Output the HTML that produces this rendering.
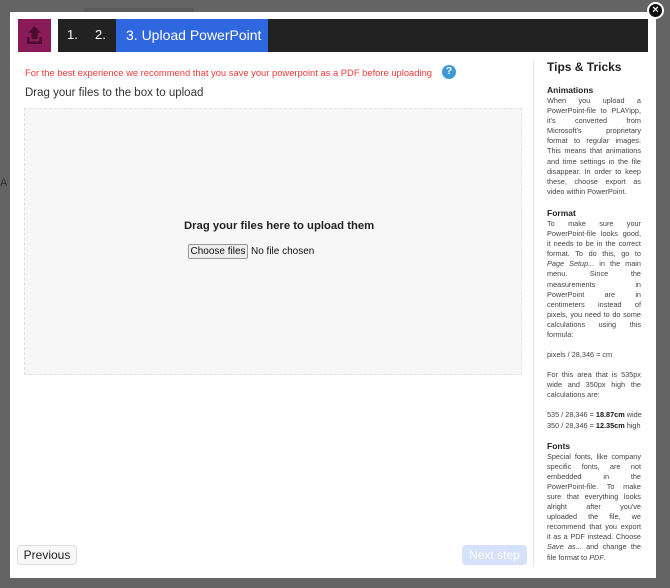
<!DOCTYPE html>
<html><head><meta charset="utf-8"><style>
*{box-sizing:border-box;margin:0;padding:0}
body{width:670px;height:588px;background:#646464;font-family:"Liberation Sans",sans-serif;position:relative;overflow:hidden}
.modal{position:absolute;left:10px;top:12px;width:646px;height:566px;background:#fff}
.abs{position:absolute;white-space:nowrap}
.side{position:absolute;left:537px;width:94px;font-size:7.3px;color:#444;line-height:10.1px}
.j{white-space:nowrap;display:flex;justify-content:space-between}
.n{white-space:nowrap}
.side h4{font-size:8.5px;color:#222;font-weight:bold;line-height:11px}
</style></head><body>
<div class="abs" style="left:84px;top:8px;width:110px;height:4px;background:#5a5a5a"></div>
<div class="abs" style="left:0;top:177px;font-size:11px;color:#333">A</div>
<div class="modal">
 <div class="abs" style="left:8px;top:7px;width:33px;height:33px;background:#8a1a58">
  <svg width="33" height="33" viewBox="0 0 33 33"><path d="M16.5 7 L23 14 H19.5 V20 H13.5 V14 H10 Z" fill="#4a0d2e"/><path d="M9 18 V25 H24 V18 H21.5 V22.5 H11.5 V18 Z" fill="#4a0d2e"/></svg>
 </div>
 <div class="abs" style="left:48px;top:7px;width:590px;height:33px;background:#222"></div>
 <div class="abs" style="left:57px;top:15px;color:#fff;font-size:13px">1.</div>
 <div class="abs" style="left:85px;top:15px;color:#fff;font-size:13px">2.</div>
 <div class="abs" style="left:106px;top:7px;width:152px;height:33px;background:#2f67e0;color:#fff;font-size:14px;line-height:33px;padding-left:10px">3. Upload PowerPoint</div>
 <div class="abs" style="left:15px;top:55px;color:#f03a3a;font-size:9.4px">For the best experience we recommend that you save your powerpoint as a PDF before uploading</div>
 <div class="abs" style="left:432px;top:53px;width:14px;height:14px;border-radius:50%;background:#3d9ad6;color:#fff;font-size:10px;font-weight:bold;text-align:center;line-height:14px">?</div>
 <div class="abs" style="left:15px;top:75px;color:#333;font-size:11.5px">Drag your files to the box to upload</div>
 <div class="abs" style="left:14px;top:96px;width:498px;height:267px;background:#f7f7f7;border:1px dashed #e2e2e2"></div>
 <div class="abs" style="left:174px;top:208px;color:#222;font-size:11.3px;font-weight:bold">Drag your files here to upload them</div>
 <div class="abs" style="left:178px;top:232px;width:60px;height:15px;border:1px solid #999;border-radius:2px;background:#eee;font-size:10px;text-align:center;line-height:13px;color:#111">Choose files</div>
 <div class="abs" style="left:241px;top:234px;font-size:10px;color:#111">No file chosen</div>
 <div class="abs" style="left:7px;top:533px;width:60px;height:20px;border:1px solid #ddd;border-radius:4px;background:#f8f8f8;font-size:12px;color:#222;text-align:center;line-height:18px">Previous</div>
 <div class="abs" style="left:452px;top:533px;width:65px;height:20px;border-radius:4px;background:#d6e1fb;font-size:12px;color:#fff;text-align:center;line-height:20px">Next step</div>
 <div class="abs" style="left:523px;top:48px;width:1px;height:506px;background:#e6e6e6"></div>
 <div class="abs" style="left:537px;top:48px;font-size:12px;font-weight:bold;color:#222">Tips &amp; Tricks</div>
 <div class="side" style="top:73px">
  <h4>Animations</h4>
  <div class="j"><span>When</span><span>you</span><span>upload</span><span>a</span></div>
  <div class="j"><span>PowerPoint-file</span><span>to</span><span>PLAYipp,</span></div>
  <div class="j"><span>it's</span><span>converted</span><span>from</span></div>
  <div class="j"><span>Microsoft's</span><span>proprietary</span></div>
  <div class="j"><span>format</span><span>to</span><span>regular</span><span>images.</span></div>
  <div class="j"><span>This</span><span>means</span><span>that</span><span>animations</span></div>
  <div class="j"><span>and</span><span>time</span><span>settings</span><span>in</span><span>the</span><span>file</span></div>
  <div class="j"><span>disappear.</span><span>In</span><span>order</span><span>to</span><span>keep</span></div>
  <div class="j"><span>these,</span><span>choose</span><span>export</span><span>as</span></div>
  <div class="n">video within PowerPoint.</div>
  <div style="height:11px"></div>
  <h4>Format</h4>
  <div class="j"><span>To</span><span>make</span><span>sure</span><span>your</span></div>
  <div class="j"><span>PowerPoint-file</span><span>looks</span><span>good,</span></div>
  <div class="j"><span>it</span><span>needs</span><span>to</span><span>be</span><span>in</span><span>the</span><span>correct</span></div>
  <div class="j"><span>format.</span><span>To</span><span>do</span><span>this,</span><span>go</span><span>to</span></div>
  <div class="j"><span><i>Page</i></span><span><i>Setup...</i></span><span>in</span><span>the</span><span>main</span></div>
  <div class="j"><span>menu.</span><span>Since</span><span>the</span></div>
  <div class="j"><span>measurements</span><span>in</span></div>
  <div class="j"><span>PowerPoint</span><span>are</span><span>in</span></div>
  <div class="j"><span>centimeters</span><span>instead</span><span>of</span></div>
  <div class="j"><span>pixels,</span><span>you</span><span>need</span><span>to</span><span>do</span><span>some</span></div>
  <div class="j"><span>calculations</span><span>using</span><span>this</span></div>
  <div class="n">formula:</div>
  <div style="height:10px"></div>
  <div class="n">pixels / 28,346 = cm</div>
  <div style="height:10px"></div>
  <div class="j"><span>For</span><span>this</span><span>area</span><span>that</span><span>is</span><span>535px</span></div>
  <div class="j"><span>wide</span><span>and</span><span>350px</span><span>high</span><span>the</span></div>
  <div class="n">calculations are:</div>
  <div style="height:10px"></div>
  <div class="n">535 / 28,346 = <b style="color:#111">18.87cm</b> wide</div>
  <div class="n">350 / 28,346 = <b style="color:#111">12.35cm</b> high</div>
  <div style="height:10px"></div>
  <h4>Fonts</h4>
  <div class="j"><span>Special</span><span>fonts,</span><span>like</span><span>company</span></div>
  <div class="j"><span>specific</span><span>fonts,</span><span>are</span><span>not</span></div>
  <div class="j"><span>embedded</span><span>in</span><span>the</span></div>
  <div class="j"><span>PowerPoint-file.</span><span>To</span><span>make</span></div>
  <div class="j"><span>sure</span><span>that</span><span>everything</span><span>looks</span></div>
  <div class="j"><span>alright</span><span>after</span><span>you've</span></div>
  <div class="j"><span>uploaded</span><span>the</span><span>file,</span><span>we</span></div>
  <div class="j"><span>recommend</span><span>that</span><span>you</span><span>export</span></div>
  <div class="j"><span>it</span><span>as</span><span>a</span><span>PDF</span><span>instead.</span><span>Choose</span></div>
  <div class="j"><span><i>Save</i></span><span><i>as...</i></span><span>and</span><span>change</span><span>the</span></div>
  <div class="n">file format to <i>PDF</i>.</div>
 </div>
</div>
<div class="abs" style="left:647px;top:2px;width:17px;height:17px;border-radius:50%;background:#111;border:2px solid #fff;color:#fff;font-size:11px;font-weight:bold;text-align:center;line-height:13px">×</div>
</body></html>
